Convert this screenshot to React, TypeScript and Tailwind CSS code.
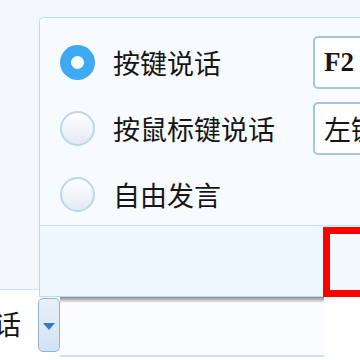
import React from "react";

const cjk = { fontFamily: '"Noto Sans CJK SC", "Noto Sans", sans-serif' };

const Radio = ({ checked }: { checked?: boolean }) =>
    checked ? (
        <div className="w-[35px] h-[35px] rounded-full bg-[#3ea9f5] flex items-center justify-center shrink-0">
            <div className="w-[13px] h-[13px] rounded-full bg-white" />
        </div>
    ) : (
        <div className="w-[35px] h-[35px] rounded-full border-2 border-[#bcd6ea] bg-gradient-to-b from-[#ffffff] to-[#e2eaf2] shrink-0" />
    );

const Option = ({ label, checked, value, mono }: { label: string; checked?: boolean; value?: string; mono?: boolean }) => (
    <div className="h-[66px] flex items-center pl-[20px]">
        <Radio checked={checked} />
        <span className="ml-[18px] text-[27px] text-[#161616] leading-none w-[200px]" style={cjk}>
            {label}
        </span>
        {value !== undefined && (
            <div className="h-[53px] w-[80px] shrink-0 bg-white border-2 border-[#a9c4dd] rounded-[5px] flex items-center pl-[9px] overflow-hidden">
                <span
                    className="text-[27px] leading-none text-[#161616] whitespace-nowrap"
                    style={mono ? { fontFamily: '"Liberation Serif", serif', fontWeight: 600 } : cjk}
                >
                    {value}
                </span>
            </div>
        )}
    </div>
);

export default function App() {
    return (
        <div className="w-[360px] h-[360px] overflow-hidden bg-white flex flex-col">
            {/* top part */}
            <div className="flex h-[297px] bg-[#f3f7fc]">
                <div className="w-[39px] shrink-0 flex flex-col">
                    <div className="flex-1" />
                    <div className="h-[8px] bg-white border-t border-[#d0e4f4]" />
                </div>

                <div className="w-[360px] shrink-0 mt-[17px] border-l border-t border-[#b8dbf6] rounded-tl-[5px] flex flex-col overflow-hidden">
                    {/* options */}
                    <div className="h-[208px] bg-[#f7fbfe] border-b border-[#c6e0f2] pt-[11px]">
                        <Option label="按键说话" checked value="F2" mono />
                        <Option label="按鼠标键说话" value="左键" />
                        <Option label="自由发言" />
                    </div>

                    {/* footer */}
                    <div className="h-[71px] flex">
                        <div className="w-[283px] bg-[#eef7fd] border-b border-[#b9dcf2]" />
                        <div className="w-[37px] h-[70px] mt-[1px] border-[7px] border-r-0 border-[#ff0000] bg-[#f2f9fe]" />
                    </div>
                </div>
            </div>

            {/* bottom part */}
            <div className="flex h-[63px]">
                <div className="w-[38px] shrink-0 flex items-center pb-[10px]">
                    <span className="ml-[-6px] text-[27px] leading-none text-[#161616]" style={cjk}>
                        话
                    </span>
                </div>
                <div className="w-[22px] h-[54px] mt-[1px] shrink-0 rounded-[5px] border border-[#8fb5d7] bg-gradient-to-b from-[#e8f0f8] to-[#d4e3f1] flex items-center justify-center pt-[2px]">
                    <div className="w-0 h-0 border-l-[6px] border-r-[6px] border-t-[7px] border-l-transparent border-r-transparent border-t-[#2b7fc6]" />
                </div>
                <div className="w-[264px] h-[60px] shrink-0 bg-[#fafcff] border-b-2 border-[#cfe0ef] flex flex-col">
                    <div className="h-[6px] bg-gradient-to-b from-[#8c8c8c] to-[#fafcff]" />
                </div>
                <div className="flex-1 bg-white" />
            </div>
        </div>
    );
}
